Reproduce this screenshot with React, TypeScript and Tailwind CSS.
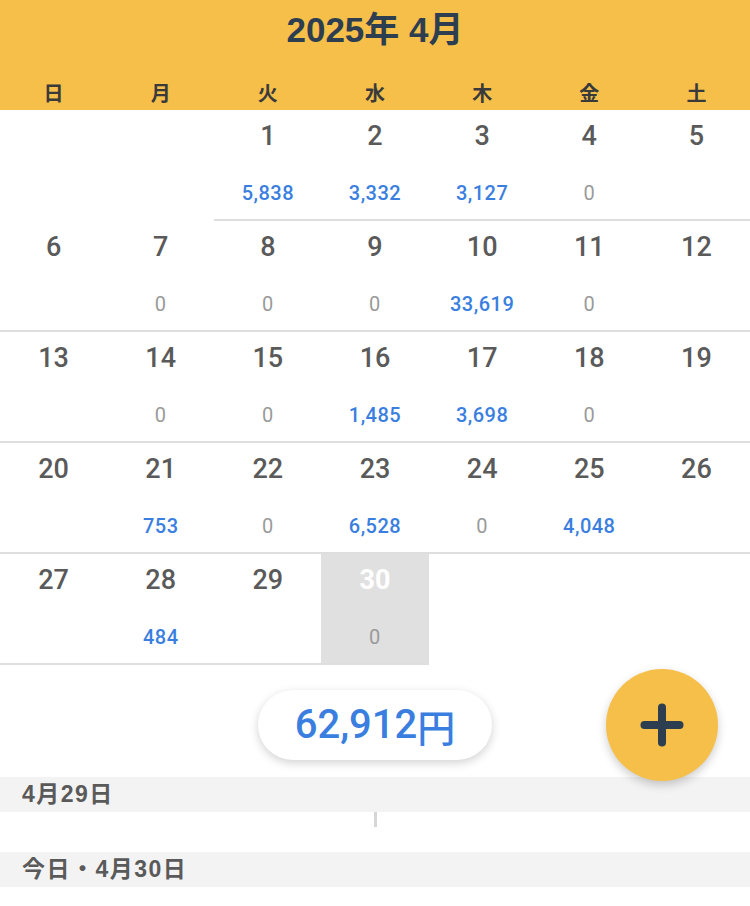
import { Plus } from "lucide-react";

type Day = { d: number; amt?: number | null };

const weekdays = ["日", "月", "火", "水", "木", "金", "土"];

// null = no amount shown
const amounts: Record<number, number | null> = {
  1: 5838, 2: 3332, 3: 3127, 4: 0, 5: null,
  6: null, 7: 0, 8: 0, 9: 0, 10: 33619, 11: 0, 12: null,
  13: null, 14: 0, 15: 0, 16: 1485, 17: 3698, 18: 0, 19: null,
  20: null, 21: 753, 22: 0, 23: 6528, 24: 0, 25: 4048, 26: null,
  27: null, 28: 484, 29: null, 30: 0,
};

const TODAY = 30;

function buildCells(): (Day | null)[] {
  const cells: (Day | null)[] = [null, null];
  for (let d = 1; d <= 30; d++) cells.push({ d, amt: amounts[d] });
  while (cells.length % 7 !== 0) cells.push(null);
  return cells;
}

const font = { fontFamily: '"Liberation Sans", "Noto Sans CJK JP", sans-serif' };
const roboto = { fontFamily: 'Roboto, "Liberation Sans", sans-serif' };

function Cell({ day }: { day: Day | null }) {
  if (!day) return <div className="h-[111px]" />;
  const isToday = day.d === TODAY;
  return (
    <div
      className={
        "h-[111px] flex flex-col items-center border-b-2 border-[#dedede] " +
        (isToday ? "bg-[#e0e0e0]" : "bg-white")
      }
    >
      <div
        className={
          "mt-[10px] text-[27px] leading-[32px] " +
          (isToday ? "text-white font-bold" : "text-[#5a5a5a] font-medium")
        }
        style={roboto}
      >
        {day.d}
      </div>
      {day.amt !== null && day.amt !== undefined && (
        <div
          className={
            "mt-[30px] text-[20px] leading-[22px] tracking-[0.5px] " +
            (day.amt > 0 ? "text-[#3a7fe0] font-medium" : "text-[#9a9a9a] font-normal")
          }
          style={roboto}
        >
          {day.amt.toLocaleString("en-US")}
        </div>
      )}
    </div>
  );
}

export default function App() {
  const cells = buildCells();
  return (
    <div className="w-[750px] h-[906px] bg-white overflow-hidden" style={font}>
      <div className="bg-[#f5bf4a] h-[110px] flex flex-col">
        <div className="text-center text-[35px] font-bold text-[#2c3e50] pt-[10px] leading-[40px]">
          2025年 4月
        </div>
        <div className="grid grid-cols-7 mt-auto pb-[4px]">
          {weekdays.map((w) => (
            <div
              key={w}
              className="text-center text-[20px] font-bold text-[#3a3a3a] leading-[26px]"
              style={{ fontFamily: '"Noto Sans CJK JP", sans-serif' }}
            >
              {w}
            </div>
          ))}
        </div>
      </div>

      <div className="grid grid-cols-7">
        {cells.map((c, i) => (
          <Cell key={i} day={c} />
        ))}
      </div>

      <div className="relative h-[112px] flex items-center justify-center">
        <div className="bg-white rounded-full h-[70px] w-[234px] flex items-center justify-center shadow-[0_3px_10px_rgba(0,0,0,0.18)] mt-[8px]">
          <span className="text-[40px] text-[#3a7fe0] font-medium" style={roboto}>
            62,912
          </span>
          <span className="text-[38px] text-[#3a7fe0] font-medium" style={{ fontFamily: '"Noto Sans CJK JP", sans-serif' }}>
            円
          </span>
        </div>
        <button className="absolute right-[32px] top-[4px] w-[112px] h-[112px] rounded-full bg-[#f5bf4a] flex items-center justify-center shadow-[0_4px_10px_rgba(0,0,0,0.2)] z-10">
          <Plus size={60} strokeWidth={3.2} color="#2c3e50" />
        </button>
      </div>

      <div className="bg-[#f3f3f3] h-[35px] flex items-center px-[22px]">
        <span className="text-[23px] font-bold text-[#5a5a5a] tracking-[1.5px]">4月29日</span>
      </div>
      <div className="h-[40px] flex justify-center">
        <div className="w-[3px] h-[15px] bg-[#d6d6d6]" />
      </div>
      <div className="bg-[#f3f3f3] h-[35px] flex items-center px-[22px]">
        <span className="text-[23px] font-bold text-[#5a5a5a] tracking-[1.5px]">今日・4月30日</span>
      </div>
    </div>
  );
}
